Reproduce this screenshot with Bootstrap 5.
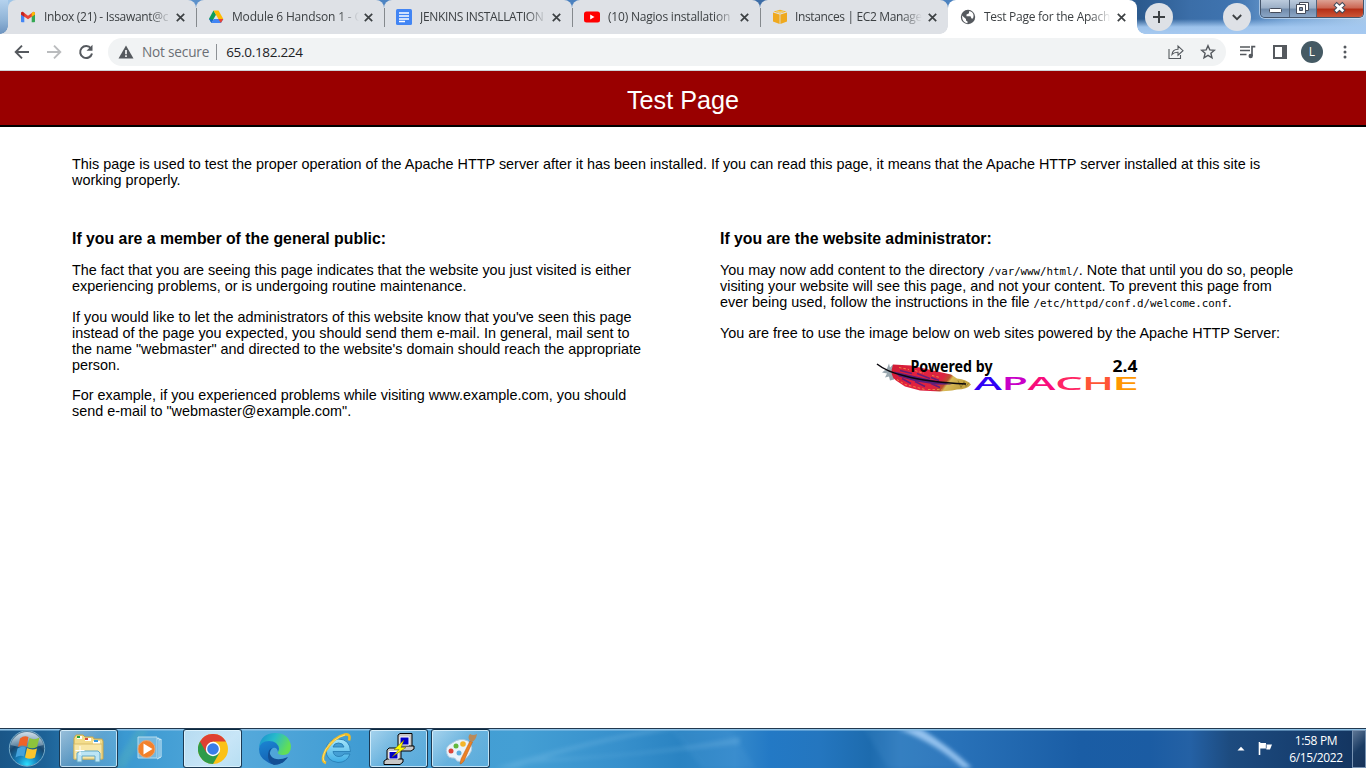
<!DOCTYPE html>
<html lang="en">
<head>
<meta charset="utf-8">
<title>Test Page for the Apache HTTP Server</title>
<link href="https://cdn.jsdelivr.net/npm/bootstrap@5.3.0/dist/css/bootstrap.min.css" rel="stylesheet">
<style>
html,body{overflow:hidden;background:#fff}
.desk{width:1366px;height:768px;overflow:hidden}
.ui{font-family:"Open Sans","Noto Sans",sans-serif}
.strip{height:34px;padding-left:8px;position:relative;
 background:linear-gradient(180deg,transparent 0,transparent 19px,rgba(163,200,240,.95) 27px,#a6c9f0 100%),linear-gradient(90deg,#a9cdec 0,#6d9fd3 60px,#4f86c4 300px,#4a80be 600px,#3c6ca6 760px,#4f86c4 930px,#2c5a8e 1140px,#3b6ea8 1190px,#3f74b0 1235px,#79a6d6 1290px,#a8c9ea 1366px)}
.strip:before{content:"";position:absolute;left:0;top:0;width:8px;height:34px;background:linear-gradient(#b5d2ee,#8fb3d6 60%,#6d93bf)}
.ctab{width:188px;height:34px;background:#dee1e6;border-radius:8px 8px 0 0;padding:0 11px 0 12px;position:relative;color:#3c4043;font-size:12px}
.ctab+.ctab:not(.live):before{content:"";position:absolute;left:0;top:8px;width:1px;height:19px;background:#85898d}
.ctab:first-child:before{content:"";position:absolute;left:-8px;bottom:0;width:8px;height:8px;background:radial-gradient(circle at 0 0,transparent 7.5px,#dee1e6 8px)}
.ctab.live{background:#fff;width:189px;z-index:1}
.ctab.live:before,.ctab.live:after{content:"";position:absolute;bottom:0;width:8px;height:8px}
.ctab.live:before{left:-8px;background:radial-gradient(circle at 0 0,#dee1e6 7.5px,#fff 8px)}
.ctab.live:after{right:-8px;background:radial-gradient(circle at 100% 0,transparent 7.5px,#fff 8px)}
.ctab .ttl{width:127px;margin-left:8px;margin-right:-3px;white-space:nowrap;-webkit-mask-image:linear-gradient(90deg,#000 84%,transparent 100%);mask-image:linear-gradient(90deg,#000 84%,transparent 100%)}
.ctab svg{flex:none}
.round28{width:28px;height:28px;background:#dee1e6}
.winbtns{height:18px;width:104px;border:1px solid #45556b;border-top:0;border-radius:0 0 5px 5px;overflow:hidden;box-shadow:0 0 0 1px rgba(220,235,250,.6)}
.winbtns>div{height:18px;line-height:0;border-right:1px solid #53657c;background:linear-gradient(#bccbdd,#9aaec6 45%,#718bab 50%,#8ea9c9)}
.winbtns>.x{border:0;background:linear-gradient(#dda193,#cb6551 45%,#b42e16 50%,#cf5a3a)}
.bar{height:36px;background:#fff}
.omni{height:28px;margin-left:13px;width:1118px;border-radius:14px;background:#f1f3f4;font-size:14px;padding-left:10px}
.rule1{height:1px;background:#cfd3d6}
.page{height:657px;font:14.4px/16px "Liberation Sans",Arial,sans-serif;color:#000}
.page header{height:56px;background:#900;border-bottom:2px solid #000;color:#fff}
.page h1{font-size:25.2px;font-weight:400;line-height:29px;margin:5px 0 0}
.page main{padding:29px 72px 0}
.page p{margin:0 0 14.6px}
.page h2{font-size:15.84px;font-weight:700;line-height:18px;margin:0 0 14px}
.page code{font:10.8px/12px "DejaVu Sans Mono",monospace;letter-spacing:-.03px;color:#000}
.cols{margin-top:42px}
.cl{width:611px;padding-right:30px;white-space:nowrap}
.cr{width:611px;padding-left:37px;white-space:nowrap}
.task{height:40px;position:relative;border-top:1px solid #22384f;
 background:linear-gradient(90deg,#1a5687 0,#1d6297 45px,#2d80b9 90px,#3b99d1 125px,#55a9db 240px,#409cd3 360px,#449fd4 520px,#3790cc 620px,#2a83c2 680px,#3489cb 735px,#2379c5 770px,#2476bf 820px,#1d6bae 870px,#2f7abd 900px,#2871b8 960px,#1a5da5 1080px,#1b5ca3 1150px,#2461a5 1190px,#1d4b7f 1230px,#173f70 1300px,#13335d 1366px)}
.task .glow{position:absolute;left:0;top:0}
.task .items{position:relative;height:39px}
.tb{width:59px;height:39px}
.tb.open{border:1px solid #1b3a54;border-top-color:#0b2a42;border-radius:3px;box-shadow:inset 0 0 0 1px rgba(225,245,255,.75);background:linear-gradient(135deg,rgba(235,248,255,.6),rgba(190,225,245,.3) 50%,rgba(160,210,240,.25))}
.tb.front{background:linear-gradient(135deg,rgba(240,250,255,.65),rgba(220,240,252,.85) 60%,rgba(215,240,250,.75))}
.clock{font-size:12px;line-height:17px;color:#fff;width:70px;letter-spacing:-.35px}
.peek{width:14px;height:38px;border:1px solid #7893b2;background:linear-gradient(135deg,#5d7594,#1b3c64 50%,#173259)}
</style>
</head>
<body>
<div class="desk d-flex flex-column">
<div class="strip ui d-flex">
 <div class="ctab d-flex align-items-center">
  <svg width="16" height="16" viewBox="0 0 16 16"><path d="M1 4v8.500q0 .8.8.8H4.300V7z" fill="#4285f4"/><path d="M11.700 7v6.300h2.500q.8 0 .8-.8V4z" fill="#34a853"/><path d="M1 4.200q0-1.500 1.500-1.500L8 6.700v3.600L1 5.400z" fill="#ea4335"/><path d="M8 6.700l5.500-4q1.500 0 1.500 1.500v1.200l-7 4.900z" fill="#ea4335"/><path d="M11.700 4l1.600-1.200q1.700 0 1.700 1.500v1.100l-3.300 2.400z" fill="#fbbc04"/><path d="M1 4.300q0-1.500 1.500-1.500L4.300 4v3.700L1 5.400z" fill="#c5221f"/></svg>
  <div class="ttl" style="letter-spacing:-.3px">Inbox (21) - Issawant@c</div>
  <svg class="ms-auto" width="9" height="9" viewBox="0 0 9 9"><path d="M.8.8l7.400 7.400M8.200.8L.8 8.200" stroke="#3c4043" stroke-width="1.700"/></svg>
 </div>
 <div class="ctab d-flex align-items-center">
  <svg width="16" height="16" viewBox="0 0 16 16"><path d="M5.500 1.500L1 9.700l2.400 4L8 5.700z" fill="#0f9d58"/><path d="M5.500 1.500h5L15.300 10h-4.900z" fill="#ffba00"/><path d="M5.700 10h9.600l-2.400 4H3.400z" fill="#4285f4"/><path d="M1 9.700L3.400 14l1.700-3z" fill="#1967d2"/><path d="M12.900 14l-2.500-4h4.900z" fill="#ea4335"/></svg>
  <div class="ttl" style="letter-spacing:-.18px">Module 6 Handson 1 - G</div>
  <svg class="ms-auto" width="9" height="9" viewBox="0 0 9 9"><path d="M.8.8l7.400 7.400M8.200.8L.8 8.200" stroke="#3c4043" stroke-width="1.700"/></svg>
 </div>
 <div class="ctab d-flex align-items-center">
  <svg width="16" height="16" viewBox="0 0 16 16"><rect width="16" height="16" rx="1.500" fill="#4285f4"/><path d="M3 4h10M3 7h10M3 9.900h10M3 12.500h6" stroke="#fff" stroke-width="1.500"/></svg>
  <div class="ttl" style="letter-spacing:-.33px">JENKINS INSTALLATION</div>
  <svg class="ms-auto" width="9" height="9" viewBox="0 0 9 9"><path d="M.8.8l7.400 7.400M8.200.8L.8 8.200" stroke="#3c4043" stroke-width="1.700"/></svg>
 </div>
 <div class="ctab d-flex align-items-center">
  <svg width="16" height="16" viewBox="0 0 16 16"><rect y="2.500" width="16" height="11" rx="2.500" fill="#f00"/><path d="M6.200 5.500v5L10.500 8z" fill="#fff"/></svg>
  <div class="ttl" style="letter-spacing:-.2px">(10) Nagios installation</div>
  <svg class="ms-auto" width="9" height="9" viewBox="0 0 9 9"><path d="M.8.8l7.400 7.400M8.200.8L.8 8.200" stroke="#3c4043" stroke-width="1.700"/></svg>
 </div>
 <div class="ctab d-flex align-items-center">
  <svg width="16" height="16" viewBox="0 0 16 16"><path d="M1 3.500L7.600 5.500v9.500L1 12.500zM15 3.500L8.400 5.500v9.500l6.600-2.500z" fill="#efa91f"/><path d="M1.500 2.600L8 .8l6.500 1.800L8 4.600z" fill="#f9b71c"/><path d="M4 1.900l6.500 2M12 1.900l-6.500 2" stroke="#dee1e6" stroke-width=".5"/></svg>
  <div class="ttl" style="letter-spacing:-.36px;margin-left:7px">Instances | EC2 Manage</div>
  <svg class="ms-auto" width="9" height="9" viewBox="0 0 9 9"><path d="M.8.8l7.400 7.400M8.200.8L.8 8.200" stroke="#3c4043" stroke-width="1.700"/></svg>
 </div>
 <div class="ctab live d-flex align-items-center">
  <svg width="16" height="16" viewBox="0 0 16 16"><circle cx="8" cy="8" r="7.200" fill="#55595e"/><path d="M2 6.500l4 3.500v1.500l1.500 1v1.800Q2 13.500 2 6.500zM9 2.300v2L6.500 5.500v1.700h4l1 2.300h1.500q1.500-4-1-6.200Q10.500 2 9 2.300z" fill="#fff"/></svg>
  <div class="ttl" style="letter-spacing:-.27px">Test Page for the Apach</div>
  <svg class="ms-auto" width="9" height="9" viewBox="0 0 9 9"><path d="M.8.8l7.400 7.400M8.200.8L.8 8.200" stroke="#3c4043" stroke-width="1.700"/></svg>
 </div>
 <div class="round28 rounded-circle d-flex align-items-center justify-content-center" style="margin:3px 0 0 8px"><svg width="12" height="12"><path d="M6 0v12M0 6h12" stroke="#3c4043" stroke-width="2"/></svg></div>
 <div class="round28 rounded-circle d-flex align-items-center justify-content-center" style="margin:3px 0 0 50px"><svg width="10" height="7"><path d="M.8 1L5 5.200 9.200 1" fill="none" stroke="#3c4043" stroke-width="1.800"/></svg></div>
 <div class="winbtns d-flex" style="margin-left:9px">
  <div style="width:29px"><svg width="28" height="17"><rect x="8.500" y="8.500" width="12" height="4" rx="1" fill="#fff" stroke="#444b5a"/></svg></div>
  <div style="width:27px"><svg width="26" height="17"><path d="M9.500 2.500h9v8h-9z" fill="#fff" stroke="#444b5a"/><path d="M6.500 4.500h9v9h-9z" fill="#fff" stroke="#444b5a"/><path d="M9.500 7.500h3v3h-3z" fill="#8296b0" stroke="#444b5a"/></svg></div>
  <div class="x flex-fill"><svg width="47" height="17"><path d="M18 3.500l9 8.500M27 3.500L18 12" stroke="#444b5a" stroke-width="4.800"/><path d="M18.700 4.200l7.600 7.100M26.300 4.200l-7.600 7.100" stroke="#fff" stroke-width="2.800"/></svg></div>
 </div>
</div>
<div class="bar ui d-flex align-items-center">
 <svg style="margin-left:14px" width="16" height="16" viewBox="0 0 16 16"><path d="M15 8H2.500M8 1.700L1.700 8 8 14.300" fill="none" stroke="#55595e" stroke-width="1.900"/></svg>
 <svg style="margin-left:16px" width="16" height="16" viewBox="0 0 16 16"><path d="M1 8h12.500M8 1.700L14.300 8 8 14.300" fill="none" stroke="#babcbe" stroke-width="1.900"/></svg>
 <svg style="margin-left:16px" width="17" height="16" viewBox="0.500 0 17 16"><path d="M13.500 4.500A6 6 0 1 0 14.500 9.500" fill="none" stroke="#55595e" stroke-width="2"/><path d="M15 .8v6H9z" fill="#55595e"/></svg>
 <div class="omni d-flex align-items-center">
  <svg width="16" height="16" viewBox="0 0 16 16"><path d="M8 1.500L15.500 14.500H.5z" fill="#55595e"/><path d="M8 6v4.200M8 11.300v1.700" stroke="#fff" stroke-width="1.600"/></svg>
  <span style="margin-left:8px;color:#6b6f74;letter-spacing:-.18px;font-size:13.600px">Not secure</span>
  <span style="margin:0 9px 0 7px;width:1px;height:16px;background:#8d9195"></span>
  <span style="color:#202124;font-size:13.500px;letter-spacing:-.3px">65.0.182.224</span>
  <svg class="ms-auto" width="16" height="16" viewBox="0 0 16 16"><path d="M1 5v9.500h11.500V11M4 10.500Q4.500 5.500 10 5.300V2l5 4.700-5 4.500V8.200Q6 8 4 10.500z" fill="none" stroke="#55595e" stroke-width="1.100"/></svg>
  <svg style="margin:0 10px 0 16px" width="16" height="16" viewBox="0 0 16 16"><path d="M8 1.700l1.800 4.200 4.600.4-3.500 3 1.100 4.500L8 11.400l-4 2.400 1.100-4.500-3.500-3 4.600-.4z" fill="none" stroke="#55595e" stroke-width="1.400"/></svg>
 </div>
 <svg style="margin-left:13px" width="17" height="16" viewBox="0 0 17 16"><path d="M1 3h10M1 6.500h10M1 10.500h6.500" stroke="#55595e" stroke-width="1.500"/><path d="M13 12V2.700h3.300" fill="none" stroke="#55595e" stroke-width="1.700"/><circle cx="11.700" cy="12" r="2.200" fill="#55595e"/></svg>
 <svg style="margin-left:17px" width="14" height="14"><path d="M0 0h14v14H0zM2 2v10h7V2z" fill="#55595e" fill-rule="evenodd"/></svg>
 <div class="rounded-circle d-flex align-items-center justify-content-center text-white" style="margin-left:14px;width:22px;height:22px;background:#455a64;font-size:12px">L</div>
 <svg style="margin-left:20px" width="4" height="16"><g fill="#55595e"><circle cx="2" cy="3" r="1.500"/><circle cx="2" cy="8" r="1.500"/><circle cx="2" cy="13" r="1.500"/></g></svg>
</div>
<div class="rule1"></div>
<div class="page">
 <header class="d-flex align-items-center justify-content-center"><h1>Test Page</h1></header>
 <main>
  <p>This page is used to test the proper operation of the Apache HTTP server after it has been installed. If you can read this page, it means that the Apache HTTP server installed at this site is<br>working properly.</p>
  <div class="cols d-flex">
   <section class="cl"><h2>If you are a member of the general public:</h2>
    <p>The fact that you are seeing this page indicates that the website you just visited is either<br>experiencing problems, or is undergoing routine maintenance.</p>
    <p>If you would like to let the administrators of this website know that you've seen this page<br>instead of the page you expected, you should send them e-mail. In general, mail sent to<br>the name "webmaster" and directed to the website's domain should reach the appropriate<br>person.</p>
    <p>For example, if you experienced problems while visiting www.example.com, you should<br>send e-mail to "webmaster@example.com".</p>
   </section>
   <section class="cr"><h2>If you are the website administrator:</h2>
    <p>You may now add content to the directory <code>/var/www/html/</code>. Note that until you do so, people<br>visiting your website will see this page, and not your content. To prevent this page from<br>ever being used, follow the instructions in the file <code>/etc/httpd/conf.d/welcome.conf</code>.</p>
    <p>You are free to use the image below on web sites powered by the Apache HTTP Server:</p>
    <div class="d-flex justify-content-center pt-1"><svg width="264" height="38" viewBox="875 359.500 264 38">
     <defs><linearGradient id="fe" x1="0" x2="1" y2=".25"><stop offset="0" stop-color="#cf1c34"/><stop offset=".35" stop-color="#e2203f"/><stop offset=".72" stop-color="#dc2440"/><stop offset=".8" stop-color="#b8502c"/><stop offset=".84" stop-color="#d9bb58"/><stop offset="1" stop-color="#c4a443"/></linearGradient>
     </defs>
     <path d="M887 369l2-5 1 4 3-3 2 6-1 9-4 1-1-4-4 1 2-4-5-1z" fill="#9aa8b0"/>
     <path d="M893 365l18 1 22 5 18 4 6 4q10 1 14 6-4 5-14 5l-5 1-12 1-20-1-15-4-9-6q-7-5-3-16z" fill="url(#fe)"/>
     <path d="M894 372l18 4 22 5 18 4-16 0-20-3-17-5z" fill="#5a1f7c"/>
     <path d="M900 371l12 3M917 374l13 5M902 379l9 5M915 382l10 5M931 384l9 4M931 378l8 3" fill="none" stroke="#671f78" stroke-width="1.500"/>
     <path d="M897 380l8 5 12 3 8 2M928 390l14 0M899 368l10 2M915 371l9 3M932 376l8 2" fill="none" stroke="#f38d42" stroke-width=".9" stroke-dasharray="2.500 2"/>
     <path d="M958 381l3 7 3-6 2 5 3-4" fill="none" stroke="#685a1c" stroke-width=".5"/>
     <path d="M877 364.500q10 8 28 12 22 6 61 8" fill="none" stroke="#09070d" stroke-width="1.500"/>
     <g font-family="'Noto Sans','Open Sans'" font-weight="700" font-size="15.800" fill="#000"><text x="910.500" y="372.500" textLength="82" lengthAdjust="spacingAndGlyphs">Powered by</text><text x="1112.500" y="372.500" textLength="25" lengthAdjust="spacingAndGlyphs">2.4</text></g>
     <g font-family="'Open Sans'" font-weight="600" font-size="18.800"><text x="974" y="390.500" textLength="28" lengthAdjust="spacingAndGlyphs" fill="#3000f5">A</text><text x="1001.500" y="390.500" textLength="26.500" lengthAdjust="spacingAndGlyphs" fill="#c800c8">P</text><text x="1027.500" y="390.500" textLength="28" lengthAdjust="spacingAndGlyphs" fill="#f80d7c">A</text><text x="1055" y="390.500" textLength="28" lengthAdjust="spacingAndGlyphs" fill="#ff2664">C</text><text x="1082" y="390.500" textLength="32" lengthAdjust="spacingAndGlyphs" fill="#ff5535">H</text><text x="1112" y="390.500" textLength="27" lengthAdjust="spacingAndGlyphs" fill="#ff9700">E</text></g>
    </svg></div>
   </section>
  </div>
 </main>
</div>
<div class="task ui">
 <svg class="glow" width="1366" height="39"><defs><filter id="bl"><feGaussianBlur stdDeviation="2"/></filter></defs><path d="M495 39Q560 18 650 0h30Q590 12 515 39zM530 30Q640 28 740 8v7Q640 26 530 34z" fill="#9ad0f2" opacity=".22" filter="url(#bl)"/><path d="M670 0h60l26 39h-54zM864 0h60l40 39h-76z" fill="#6fb2e8" opacity=".1" filter="url(#bl)"/><path d="M898 0h23Q950 18 972 39h-9Q936 14 898 0z" fill="#a7d0f8" opacity=".85" filter="url(#bl)"/><path d="M112 39l25-39h12l-24 39z" fill="#7fdb9b" opacity=".15" filter="url(#bl)"/><path d="M0 .8h1366" stroke="#8fc3e8" stroke-width="1.400"/></svg>
 <div class="items d-flex">
  <svg style="margin-left:7px" width="40" height="39" viewBox="7 729 40 39"><defs><radialGradient id="orb" cx=".5" cy=".95" r=".8"><stop offset="0" stop-color="#2de0ff"/><stop offset=".35" stop-color="#1682bd"/><stop offset=".75" stop-color="#164770"/><stop offset="1" stop-color="#4d7390"/></radialGradient><linearGradient id="hi" x2="0" y2="1"><stop offset="0" stop-color="#e8f2f8" stop-opacity=".85"/><stop offset="1" stop-color="#a9c5d8" stop-opacity=".4"/></linearGradient></defs><circle cx="27" cy="748.500" r="17.700" fill="url(#orb)" stroke="#74aac8"/><path d="M10.500 745a17 17 0 0 1 33 0q-16 5-33 0z" fill="url(#hi)"/><path d="M20 738.500q4-3.500 8.500-1.500l-2 9.500q-4.500-2-8.500.5z" fill="#ee6327"/><path d="M29.500 738q5 2.500 10-.5l-2.500 9.500q-5 2.500-9.500 0z" fill="#8cc43c"/><path d="M17.500 748.500q4-3 8.500-1l-2 9q-4-2-8.500 1z" fill="#44a2dc"/><path d="M27 748q5 2.500 10 .5l-2 9q-5 2.500-10 0z" fill="#fbc52d"/></svg>
  <div class="d-flex" style="gap:3px;margin-left:12px">
   <div class="tb open d-flex align-items-center justify-content-center"><svg width="34" height="32" viewBox="0 0 34 32"><path d="M2 5l2-3h7l2 2h8l1 2h8l1 2v18H2z" fill="#f3dd8c" stroke="#c7a649"/><path d="M5 3h5v3H5zM13 5h6v3h-6zM21 8h7v3h-7z" fill="#fff"/><path d="M5 3h3v2H5z" fill="#26a33c"/><path d="M13 5h3v2h-3z" fill="#d94e3c"/><path d="M22 7h4v2h-4z" fill="#3698dc"/><path d="M2 11h28v15H2z" fill="#f8e7a7" stroke="#d9bd68"/><path d="M5 29V20l4-2h17l2 2v9h-5v-6H10v6z" fill="#bce5f5" stroke="#62a7c5"/><path d="M8 13v9M3.500 17.500h9" stroke="#fff"/></svg></div>
   <div class="tb d-flex align-items-center justify-content-center"><svg width="30" height="28" viewBox="2 0 30 28"><path d="M4 2h19v21H4z" fill="#73b8df" stroke="#b7dced"/><path d="M23 4l2-1v20l-2 1M25 5l2-1v18l-2 1" fill="none" stroke="#d6edf7"/><circle cx="12.500" cy="14" r="8.500" fill="#f3812a" stroke="#e3a578"/><path d="M9.500 8.500v11l9-5.500z" fill="#fff"/></svg></div>
   <div class="tb open front d-flex align-items-center justify-content-center"><svg width="30" height="30" viewBox="0 0 30 30"><circle cx="15" cy="15" r="15" fill="#fbc116"/><path d="M15 15L2 7.500A15 15 0 0 0 15 30l6.500-11.200z" fill="#2e9b4a"/><path d="M2 7.500A15 15 0 0 1 28 7.500H15L8.500 18.700z" fill="#df4033"/><circle cx="15" cy="15" r="7.200" fill="#fff"/><circle cx="15" cy="15" r="5.800" fill="#3a7de8"/></svg></div>
   <div class="tb d-flex align-items-center justify-content-center"><svg width="32" height="32" viewBox="0 0 32 32"><defs><linearGradient id="ed" x2="1" y2=".4"><stop offset="0" stop-color="#158bd0"/><stop offset=".5" stop-color="#28bbca"/><stop offset="1" stop-color="#62df55"/></linearGradient><linearGradient id="eb" x2=".3" y2="1"><stop offset="0" stop-color="#1b86d3"/><stop offset="1" stop-color="#1462b4"/></linearGradient></defs><path d="M0 14Q2 0 16 0q14 0 16 13 0 9-8 9-6 0-5-3 3-6-4-9Q6 7 0 14z" fill="url(#ed)"/><path d="M0 16Q1 8 10 8q9 0 10 8l-1 3q-1-5-5-4-5 3-2 9 3 6 8 7-7 2-13-3Q0 24 0 16z" fill="url(#eb)"/><path d="M13 15q-4 4-1 8 5 6 17 1-5 8-14 8-6-3-6-9 0-7 4-8z" fill="#124f94"/></svg></div>
   <div class="tb d-flex align-items-center justify-content-center"><svg width="32" height="32" viewBox="0 0 32 32"><defs><linearGradient id="ie" x2="0" y2="1"><stop offset="0" stop-color="#a5e6fb"/><stop offset="1" stop-color="#3cabe4"/></linearGradient></defs><path d="M29.500 18.500H12q1 5 6 5 3.500 0 5-2.500h6q-3 8.500-12 8.500Q5 28 5 17 6 6 17 6q12 0 12.500 12.500zM12 14h11q-1-4-5.500-4T12 14z" fill="url(#ie)" stroke="#287fb5" stroke-width=".9" fill-rule="evenodd"/><path d="M5 30q-6-2 0-13Q13 4 24 1.500q6-1 4 6" fill="none" stroke="#f2bd25" stroke-width="2.600"/><path d="M4 29q-4-3 1-13Q13 5 24 2" fill="none" stroke="#ffe989" stroke-width=".8"/></svg></div>
   <div class="tb open d-flex align-items-center justify-content-center"><svg width="32" height="32" viewBox="0 0 32 32"><g stroke="#000" fill="#c8c8c8"><path d="M15 2l2-1.500h12V13l-2 2H15z"/><path d="M13 15l3-2h15v3l-3 2H13z"/><path d="M4 17l2-2h12v11l-2 2H4z"/><path d="M1 28l3-2h16v3l-3 2.500H1z"/></g><path d="M17 4h9v8h-9zM6 18.500h9V26H6z" fill="#0000c9" stroke="#fff"/><path d="M21 7l-10 9.500h5L9 24l14-9.500h-5z" fill="#ff0" stroke="#685f00" stroke-width=".5"/></svg></div>
   <div class="tb open d-flex align-items-center justify-content-center"><svg width="34" height="34" viewBox="0 0 34 34"><path d="M3 22q-3-7 5-11 8-6 16-2 7 6 1 14-6 8-12 6-2-4-5-3-4 0-5-4z" fill="#e9f3fb" stroke="#a9c9df"/><circle cx="7" cy="19" r="2.500" fill="#de4539"/><circle cx="12" cy="14" r="2.500" fill="#62b83e"/><circle cx="19" cy="12" r="2.800" fill="#f3b52b"/><circle cx="15" cy="21" r="2.500" fill="#5baede"/><path d="M16 32l1-5 9-18 2.500 1L20 29q-2 3-4 3z" fill="#eb8125" stroke="#b95d15" stroke-width=".5"/><path d="M26 9q-3-4 0-7 3 2 7 0-1 6-5 8z" fill="#b98a59"/></svg></div>
  </div>
  <div class="ms-auto d-flex align-items-center">
   <svg width="8" height="5"><path d="M.5 4.500L4 .8l3.500 3.700z" fill="#fff"/></svg>
   <svg style="margin-left:13px" width="16" height="15"><path d="M1.500 1v13" stroke="#fff" stroke-width="1.600"/><path d="M2 2h6v1.500h6L12 8.500H8.500L8 7.500H2z" fill="#fff"/><path d="M8.300 3.500v4" stroke="#1d3f6b" stroke-width=".7"/></svg>
   <div class="clock text-center" style="margin:1px 1px 0 7px">1:58 PM<br>6/15/2022</div>
   <div class="peek"></div>
  </div>
 </div>
</div>
</div>
<script src="https://cdn.jsdelivr.net/npm/bootstrap@5.3.0/dist/js/bootstrap.bundle.min.js"></script>
</body>
</html>
